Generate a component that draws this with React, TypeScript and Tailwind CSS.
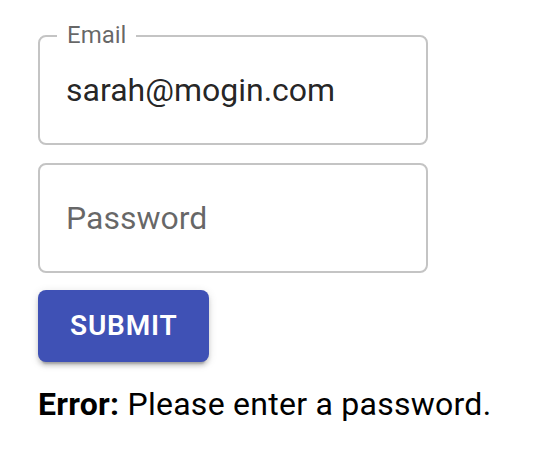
export default function App() {
  return (
    <div className="min-h-screen bg-white pl-[38px] pt-[35px] font-['Roboto',sans-serif]">
      <form className="flex w-[390px] flex-col" onSubmit={(e) => e.preventDefault()}>
        <div className="relative flex h-[110px] items-center rounded-lg border-2 border-[#c4c4c4] pl-[26px]">
          <span className="absolute left-[17px] top-[-17px] bg-white px-[10px] text-[24px] leading-[30px] text-black/60">
            Email
          </span>
          <span className="text-[32px] text-black/[0.87]">sarah@mogin.com</span>
        </div>
        <div className="mt-[18px] flex h-[110px] items-center rounded-lg border-2 border-[#c4c4c4] pl-[26px]">
          <span className="text-[32px] text-black/60">Password</span>
        </div>
        <div className="mt-[17px]">
          <button
            type="submit"
            className="h-[72px] rounded-lg bg-[#3f51b5] px-[32px] text-[28px] font-semibold uppercase tracking-[0.02857em] text-white shadow-[0_6px_2px_-4px_rgba(0,0,0,0.2),0_4px_4px_0_rgba(0,0,0,0.14),0_2px_10px_0_rgba(0,0,0,0.12)]"
          >
            Submit
          </button>
        </div>
        <p className="mt-[18px] whitespace-nowrap text-[32px] leading-[48px] tracking-[0.008em] text-black">
          <strong className="font-bold">Error:</strong> Please enter a password.
        </p>
      </form>
    </div>
  );
}
